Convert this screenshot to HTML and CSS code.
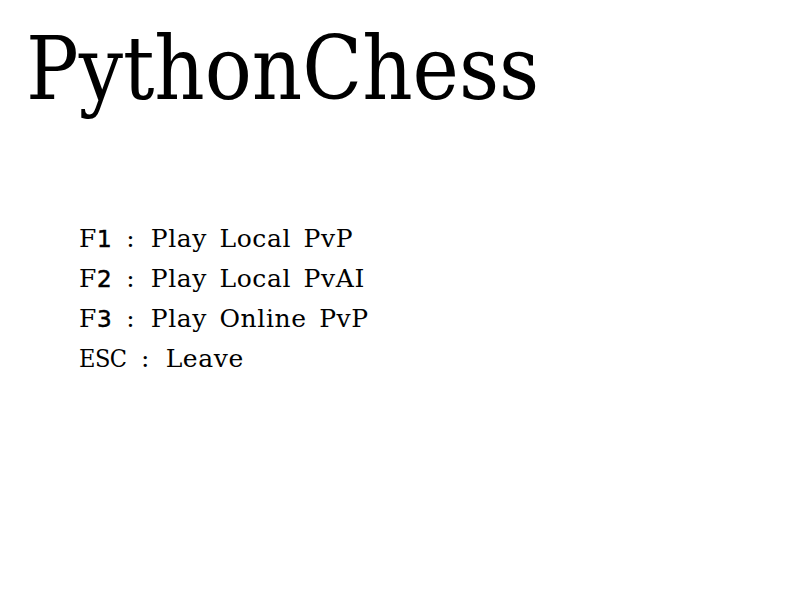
FILE: index.html
```html
<!DOCTYPE html>
<html>
<head>
<meta charset="utf-8">
<link rel="stylesheet" href="styles.css">
</head>
<body>
<div class="screen">
  <h1 class="title">PythonChess</h1>
  <ul class="menu">
    <li>F<span class="num">1</span> <span class="sep">:</span> Play Local PvP</li>
    <li>F<span class="num">2</span> <span class="sep">:</span> Play Local PvAI</li>
    <li>F<span class="num">3</span> <span class="sep">:</span> Play Online PvP</li>
    <li><span class="key">ESC</span> <span class="sep">:</span> Leave</li>
  </ul>
</div>
</body>
</html>
```
FILE: styles.css
```css
html, body {
  margin: 0;
  padding: 0;
  background: #fff;
}
.screen {
  width: 800px;
  height: 600px;
  font-family: "DejaVu Serif", serif;
  color: #000;
}
.title {
  margin: 0;
  padding: 14px 0 0 26px;
  font-family: "DejaVu Serif Condensed", "DejaVu Serif", serif;
  font-stretch: condensed;
  font-weight: normal;
  font-size: 87px;
  line-height: 110px;
}
.menu {
  list-style: none;
  margin: 0;
  padding: 95px 0 0 79px;
  font-size: 25px;
  line-height: 40px;
  letter-spacing: 0.6px;
  word-spacing: 4px;
}
.num {
  font-family: "DejaVu Sans", sans-serif;
  font-size: 23px;
  letter-spacing: 0;
  -webkit-text-stroke: 0.5px #000;
}
.key {
  font-family: "DejaVu Serif Condensed", "DejaVu Serif", serif;
  font-stretch: condensed;
  letter-spacing: -0.5px;
}
.sep {
  padding: 0 3px 0 2px;
}
```
